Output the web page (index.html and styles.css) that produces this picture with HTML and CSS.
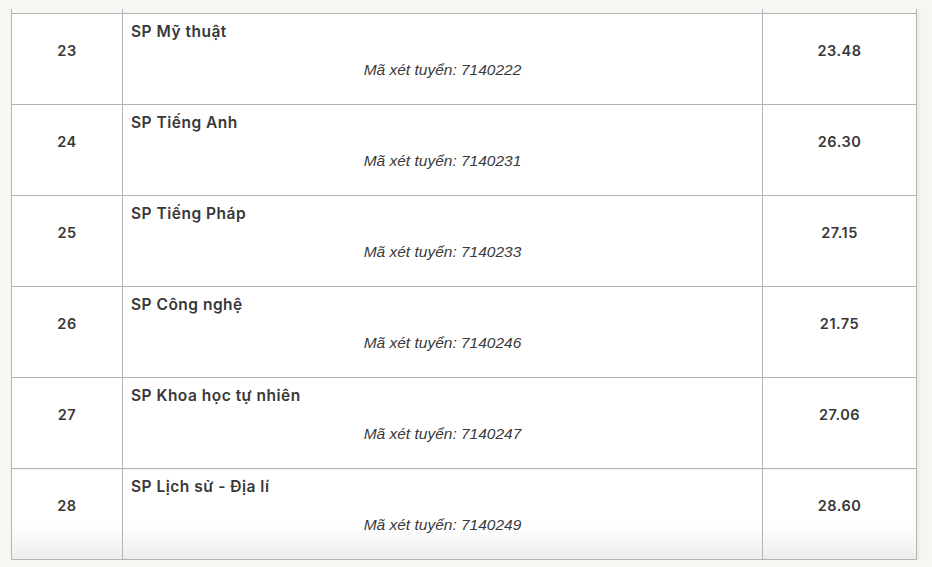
FILE: index.html
```html
<!DOCTYPE html>
<html lang="vi">
<head>
<meta charset="utf-8">
<title>Điểm chuẩn</title>
<link rel="stylesheet" href="styles.css">
</head>
<body>
<div class="wrap">
<table class="scores">
  <colgroup>
    <col class="c-no"><col class="c-name"><col class="c-score">
  </colgroup>
  <tbody>
    <tr class="ghost"><td></td><td></td><td></td></tr>
    <tr>
      <td class="no">23</td>
      <td class="name"><div class="title">SP Mỹ thuật</div><div class="code">Mã xét tuyển: 7140222</div></td>
      <td class="score">23.48</td>
    </tr>
    <tr>
      <td class="no">24</td>
      <td class="name"><div class="title">SP Tiếng Anh</div><div class="code">Mã xét tuyển: 7140231</div></td>
      <td class="score">26.30</td>
    </tr>
    <tr>
      <td class="no">25</td>
      <td class="name"><div class="title">SP Tiếng Pháp</div><div class="code">Mã xét tuyển: 7140233</div></td>
      <td class="score">27.15</td>
    </tr>
    <tr>
      <td class="no">26</td>
      <td class="name"><div class="title">SP Công nghệ</div><div class="code">Mã xét tuyển: 7140246</div></td>
      <td class="score">21.75</td>
    </tr>
    <tr>
      <td class="no">27</td>
      <td class="name"><div class="title">SP Khoa học tự nhiên</div><div class="code">Mã xét tuyển: 7140247</div></td>
      <td class="score">27.06</td>
    </tr>
    <tr class="last">
      <td class="no">28</td>
      <td class="name"><div class="title">SP Lịch sử - Địa lí</div><div class="code">Mã xét tuyển: 7140249</div></td>
      <td class="score">28.60</td>
    </tr>
  </tbody>
</table>
</div>
</body>
</html>
```

FILE: styles.css
```css
html, body {
  margin: 0;
  padding: 0;
  background: #f7f6f2;
}
body {
  font-family: "Liberation Sans", Arial, sans-serif;
  color: #383838;
  font-size: 15.5px;
}
.wrap {
  padding: 9px 0 0 11px;
}
.scores {
  width: 905px;
  border-collapse: collapse;
  table-layout: fixed;
  box-shadow: 2px 3px 4px rgba(0, 0, 0, 0.06);
}
.c-no { width: 111px; }
.c-name { width: 640px; }
.c-score { width: 154px; }
.scores td {
  border: 1px solid #b3b3b3;
  background: #fff;
  height: 58px;
  padding: 8px 8px 24px;
  vertical-align: middle;
  line-height: 20px;
}
.scores tr.ghost td {
  height: 4px;
  padding: 0;
  border-top: none;
  background: transparent;
}
.no, .score, .title {
  font-family: Inter, "Liberation Sans", sans-serif;
  font-weight: 600;
  font-size: 14.5px;
  letter-spacing: 0.5px;
}
.title {
  font-size: 15.5px;
  letter-spacing: 0.5px;
}
.no, .score {
  text-align: center;
}
.code {
  margin-top: 18px;
  text-align: center;
  font-style: italic;
  color: #3a3a3a;
}
.scores tr.last td {
  background: linear-gradient(to bottom, #fff 0, #fff 62%, #ededed 100%);
}
```
